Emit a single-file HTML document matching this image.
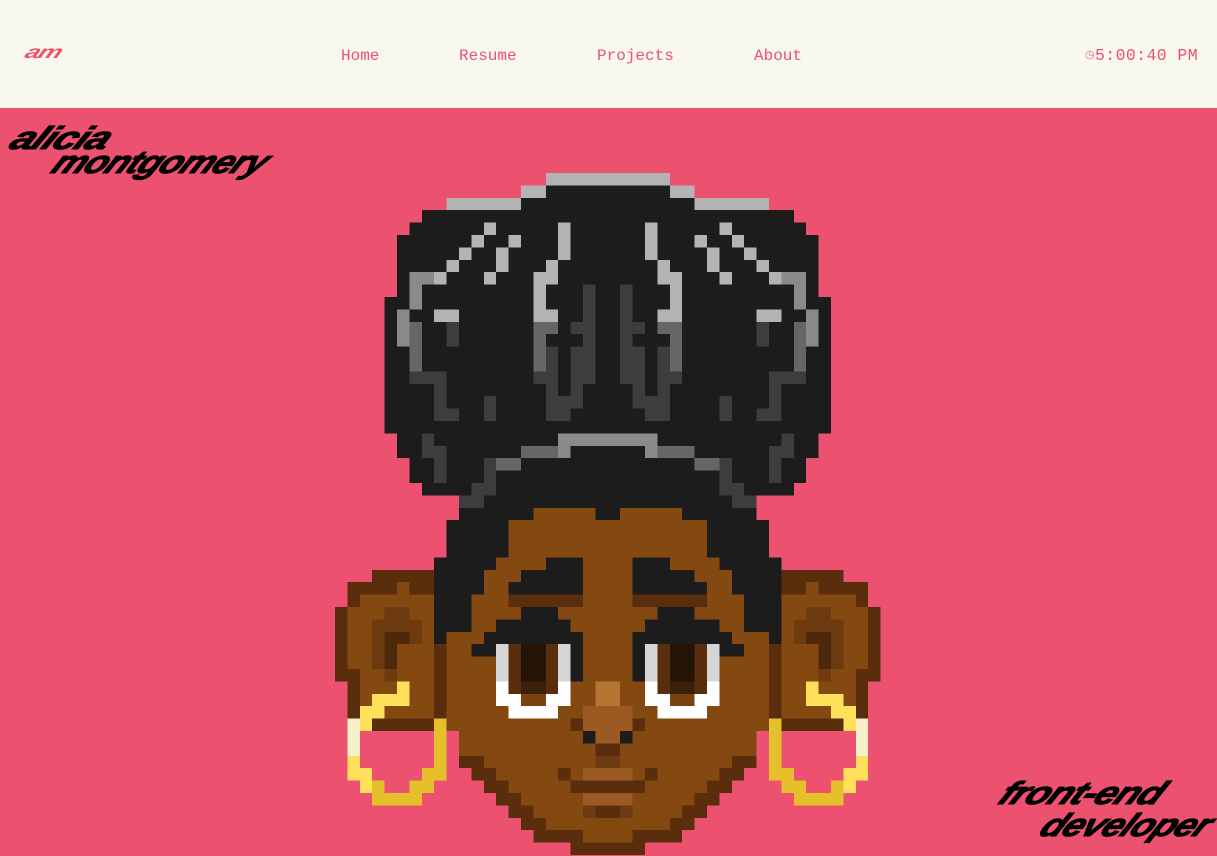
<!DOCTYPE html>
<html><head><meta charset="utf-8"><style>
html,body{margin:0;padding:0}
body{width:1217px;height:856px;overflow:hidden;background:#ec5270;position:relative;font-family:"Liberation Mono",monospace}
.hdr{position:absolute;left:0;top:0;width:1217px;height:108px;background:#f8f8ee}
.nav{position:absolute;top:46px;font-size:16px;color:#ec5270;line-height:20px}
.logo{position:absolute;left:26px;top:42px;font-family:"Liberation Sans",sans-serif;font-weight:900;font-style:italic;font-size:18px;color:#ec5270;transform:skewX(-25deg) scaleX(1.45);transform-origin:left;letter-spacing:-1px}
.t{position:absolute;font-family:"Liberation Sans",sans-serif;font-weight:900;font-style:italic;color:#000;white-space:nowrap;transform-origin:left top;letter-spacing:-1px;-webkit-text-stroke:1px #000}
svg{position:absolute;left:335px;top:173px}
</style></head><body>
<div class="hdr">
<div class="logo">am</div>
<div class="nav" style="left:341px">Home</div>
<div class="nav" style="left:459px">Resume</div>
<div class="nav" style="left:597px">Projects</div>
<div class="nav" style="left:754px">About</div>
<div class="nav" style="left:1085px;font-size:16.5px;letter-spacing:0.4px"><span style="font-size:11px;position:relative;top:-2px">◷</span>5:00:40 PM</div>
</div>
<div class="t" style="left:24px;top:120px;font-size:32px;transform:skewX(-30deg) scaleX(1.3)">alicia</div>
<div class="t" style="left:66px;top:144px;font-size:32px;transform:skewX(-30deg) scaleX(1.15)">montgomery</div>
<div class="t" style="left:1013px;top:775px;font-size:32px;transform:skewX(-30deg) scaleX(1.22)">front-end</div>
<div class="t" style="left:1054px;top:807px;font-size:32px;transform:skewX(-30deg) scaleX(1.17)">developer</div>

<svg width="545.6" height="682" viewBox="0 0 44 55" shape-rendering="crispEdges">
<defs>
<g id="half">
<g fill="#1c1c1c">
<rect x="17" y="1" width="5" height="1"/><rect x="15" y="2" width="7" height="1"/>
<rect x="7" y="3" width="15" height="1"/><rect x="6" y="4" width="16" height="1"/>
<rect x="5" y="5" width="17" height="5"/><rect x="4" y="10" width="18" height="11"/>
<rect x="5" y="21" width="17" height="2"/><rect x="6" y="23" width="16" height="2"/>
<rect x="7" y="25" width="15" height="1"/><rect x="10" y="26" width="12" height="2"/>
<rect x="9" y="28" width="13" height="3"/><rect x="8" y="31" width="14" height="7"/>
</g>
<g fill="#b3b3b3">
<rect x="17" y="0" width="5" height="1"/><rect x="15" y="1" width="2" height="1"/><rect x="9" y="2" width="6" height="1"/>
<rect x="12" y="4" width="1" height="1"/><rect x="18" y="4" width="1" height="3"/>
<rect x="11" y="5" width="1" height="1"/><rect x="14" y="5" width="1" height="1"/>
<rect x="10" y="6" width="1" height="1"/><rect x="13" y="6" width="1" height="2"/>
<rect x="9" y="7" width="1" height="1"/><rect x="17" y="7" width="1" height="1"/>
<rect x="8" y="8" width="1" height="1"/><rect x="12" y="8" width="1" height="1"/><rect x="16" y="8" width="2" height="1"/>
<rect x="16" y="9" width="1" height="2"/><rect x="8" y="11" width="2" height="1"/><rect x="16" y="11" width="2" height="1"/>
</g>
<g fill="#8a8a8a">
<rect x="6" y="8" width="2" height="1"/><rect x="6" y="9" width="1" height="2"/><rect x="5" y="11" width="1" height="3"/>
<rect x="18" y="21" width="4" height="1"/><rect x="18" y="22" width="1" height="1"/>
</g>
<g fill="#666">
<rect x="6" y="12" width="1" height="4"/><rect x="16" y="12" width="2" height="1"/><rect x="16" y="13" width="1" height="3"/>
<rect x="15" y="22" width="3" height="1"/><rect x="13" y="23" width="2" height="1"/>
</g>
<g fill="#3d3d3d">
<rect x="20" y="9" width="1" height="5"/><rect x="9" y="12" width="1" height="2"/><rect x="19" y="12" width="1" height="1"/>
<rect x="17" y="14" width="1" height="6"/><rect x="19" y="14" width="2" height="3"/><rect x="19" y="17" width="1" height="2"/>
<rect x="6" y="16" width="3" height="1"/><rect x="8" y="17" width="1" height="3"/><rect x="9" y="19" width="1" height="1"/>
<rect x="12" y="18" width="1" height="2"/><rect x="18" y="18" width="1" height="2"/><rect x="16" y="16" width="1" height="1"/>
<rect x="7" y="21" width="1" height="2"/><rect x="8" y="22" width="1" height="3"/><rect x="12" y="23" width="1" height="2"/>
<rect x="11" y="25" width="2" height="1"/><rect x="10" y="26" width="2" height="1"/>
</g>
<g fill="#5a2e0c">
<rect x="3" y="32" width="5" height="1"/><rect x="1" y="33" width="4" height="1"/><rect x="6" y="33" width="2" height="1"/>
<rect x="1" y="34" width="1" height="1"/><rect x="0" y="35" width="1" height="5"/><rect x="0" y="40" width="2" height="1"/>
<rect x="1" y="41" width="1" height="3"/>
</g>
<g fill="#844811">
<rect x="5" y="33" width="1" height="1"/><rect x="2" y="34" width="6" height="1"/><rect x="1" y="35" width="7" height="5"/>
<rect x="2" y="40" width="6" height="1"/><rect x="2" y="41" width="6" height="3"/>
</g>
<g fill="#6e3a10"><rect x="4" y="35" width="2" height="1"/><rect x="3" y="36" width="4" height="1"/><rect x="3" y="37" width="1" height="3"/><rect x="6" y="37" width="1" height="1"/><rect x="4" y="40" width="1" height="1"/></g>
<g fill="#4e280a"><rect x="4" y="37" width="2" height="1"/><rect x="4" y="38" width="1" height="2"/></g>
<g fill="#844811">
<rect x="16" y="27" width="5" height="1"/><rect x="14" y="28" width="8" height="3"/><rect x="13" y="31" width="9" height="1"/>
<rect x="12" y="32" width="10" height="2"/><rect x="11" y="34" width="11" height="3"/><rect x="9" y="37" width="13" height="8"/>
<rect x="10" y="45" width="12" height="2"/><rect x="12" y="47" width="10" height="1"/><rect x="13" y="48" width="9" height="1"/>
<rect x="14" y="49" width="8" height="1"/><rect x="15" y="50" width="7" height="1"/><rect x="16" y="51" width="6" height="1"/>
<rect x="17" y="52" width="5" height="1"/><rect x="20" y="53" width="2" height="1"/>
</g>
<g fill="#5a2e0c">
<rect x="8" y="38" width="1" height="6"/>
<rect x="10" y="47" width="2" height="1"/><rect x="11" y="48" width="2" height="1"/><rect x="12" y="49" width="2" height="1"/>
<rect x="13" y="50" width="2" height="1"/><rect x="14" y="51" width="2" height="1"/><rect x="15" y="52" width="2" height="1"/>
<rect x="16" y="53" width="4" height="1"/><rect x="19" y="54" width="3" height="1"/>
<rect x="14" y="34" width="6" height="1"/>
<rect x="14" y="38" width="1" height="4"/><rect x="17" y="38" width="1" height="4"/>
<rect x="19" y="44" width="1" height="1"/><rect x="21" y="46" width="1" height="1"/>
<rect x="18" y="48" width="1" height="1"/><rect x="19" y="49" width="3" height="1"/><rect x="21" y="51" width="1" height="1"/>
</g>
<g fill="#1c1c1c">
<rect x="17" y="31" width="3" height="1"/><rect x="15" y="32" width="5" height="1"/><rect x="14" y="33" width="6" height="1"/>
<rect x="15" y="35" width="3" height="1"/><rect x="13" y="36" width="6" height="1"/><rect x="12" y="37" width="8" height="1"/>
<rect x="11" y="38" width="2" height="1"/><rect x="19" y="38" width="1" height="3"/>
<rect x="20" y="45" width="1" height="1"/>
</g>
<g fill="#d6d6d6"><rect x="13" y="38" width="1" height="3"/><rect x="18" y="38" width="1" height="3"/></g>
<rect x="15" y="38" width="2" height="3" fill="#231407"/>
<rect x="15" y="41" width="2" height="1" fill="#3a200a"/>
<rect x="15" y="42" width="2" height="1" fill="#7a4210"/>
<g fill="#fff"><rect x="13" y="41" width="1" height="1"/><rect x="18" y="41" width="1" height="1"/><rect x="13" y="42" width="2" height="1"/><rect x="17" y="42" width="2" height="1"/><rect x="14" y="43" width="4" height="1"/></g>
<rect x="21" y="41" width="1" height="2" fill="#b57535"/>
<g fill="#9a5a22"><rect x="20" y="43" width="2" height="2"/><rect x="21" y="45" width="1" height="1"/><rect x="20" y="48" width="2" height="1"/><rect x="20" y="50" width="2" height="1"/></g>
<g fill="#6e3a10"><rect x="21" y="47" width="1" height="1"/><rect x="20" y="51" width="1" height="1"/></g>
<g fill="#ffe05a"><rect x="5" y="41" width="1" height="1"/><rect x="3" y="42" width="3" height="1"/><rect x="2" y="43" width="2" height="1"/><rect x="2" y="44" width="1" height="1"/><rect x="1" y="47" width="1" height="1"/><rect x="1" y="48" width="2" height="1"/><rect x="2" y="49" width="1" height="1"/></g>
<rect x="1" y="44" width="1" height="3" fill="#f8f0c8"/>
<rect x="3" y="44" width="5" height="1" fill="#5a2e0c"/>
<g fill="#e6c02a"><rect x="8" y="44" width="1" height="4"/><rect x="7" y="48" width="2" height="1"/><rect x="3" y="49" width="1" height="1"/><rect x="6" y="49" width="2" height="1"/><rect x="3" y="50" width="4" height="1"/></g>
</g>
</defs>
<use href="#half"/>
<use href="#half" transform="translate(44,0) scale(-1,1)"/>
</svg>
</body></html>
